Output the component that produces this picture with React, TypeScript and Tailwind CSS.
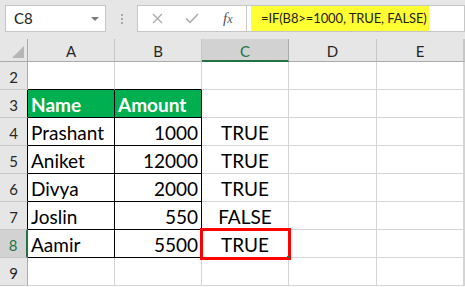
import React from "react";

const font = { fontFamily: "Lato, 'Liberation Sans', sans-serif" };

const COLS = ["A", "B", "C", "D", "E", ""];

const DATA: { row: number; a?: string; b?: string; c?: string }[] = [
  { row: 2 },
  { row: 3, a: "Name", b: "Amount" },
  { row: 4, a: "Prashant", b: "1000", c: "TRUE" },
  { row: 5, a: "Aniket", b: "12000", c: "TRUE" },
  { row: 6, a: "Divya", b: "2000", c: "TRUE" },
  { row: 7, a: "Joslin", b: "550", c: "FALSE" },
  { row: 8, a: "Aamir", b: "5500", c: "TRUE" },
  { row: 9 },
];

function Toolbar() {
  return (
    <div className="h-[39px] bg-[#e6e6e6] flex items-start pt-[5px]">
      <div className="ml-[5px] w-[101px] h-[27px] border border-[#c6c6c6] bg-white flex items-center justify-between pl-[8px] pr-[6px]">
        <span className="text-[15px] text-[#222]">C8</span>
        <svg width="8" height="4" viewBox="0 0 8 4">
          <path d="M0 0 L8 0 L4 4 Z" fill="#7a7a7a" />
        </svg>
      </div>
      <div className="w-[31px] h-[27px] flex flex-col items-center justify-center gap-[2px]">
        <span className="w-[2px] h-[2px] bg-[#a8a8a8]" />
        <span className="w-[2px] h-[2px] bg-[#a8a8a8]" />
        <span className="w-[2px] h-[2px] bg-[#a8a8a8]" />
      </div>
      <div className="w-[110px] h-[27px] border border-[#c6c6c6] bg-white flex items-center pl-[14px]">
        <svg width="11" height="11" viewBox="0 0 11 11">
          <path d="M1 1 L10 10 M10 1 L1 10" stroke="#a9a9a9" strokeWidth="1.3" />
        </svg>
        <svg className="ml-[22px]" width="14" height="11" viewBox="0 0 14 11">
          <path d="M1 5.5 L5 9.5 L13 1" stroke="#a9a9a9" strokeWidth="1.5" fill="none" />
        </svg>
        <span
          className="ml-[24px] italic text-[15px] text-[#555] leading-none"
          style={{ fontFamily: "'Liberation Serif', serif" }}
        >
          f<span className="text-[12px]">x</span>
        </span>
      </div>
      <div className="flex-1 h-[27px] border border-l-0 border-[#c6c6c6] bg-white pl-[4px]">
        <div className="w-[178px] h-[25px] bg-[#ffff33] flex items-center pl-[10px] text-[13px] tracking-[-0.1px] text-[#222] whitespace-nowrap">
          =IF(B8&gt;=1000, TRUE, FALSE)
        </div>
      </div>
    </div>
  );
}

function ColumnHeaders() {
  return (
    <>
      <div className="h-[23px] bg-[#e6e6e6] border-b border-r border-[#ababab] flex items-end justify-end pr-[3px] pb-[3px]">
        <svg width="12" height="12" viewBox="0 0 12 12">
          <path d="M12 0 L12 12 L0 12 Z" fill="#b6b6b6" />
        </svg>
      </div>
      {COLS.map((c) =>
        c === "C" ? (
          <div
            key={c}
            className="h-[23px] bg-[#d2d2d2] border-r border-[#ababab] border-b-2 border-b-[#217346] flex items-end justify-center pb-[1px] leading-none text-[15px] text-[#217346]"
          >
            {c}
          </div>
        ) : (
          <div
            key={c || "f"}
            className="h-[23px] bg-[#e6e6e6] border-r border-b border-[#c6c6c6] border-b-[#ababab] flex items-end justify-center pb-[2px] leading-none text-[15px] text-[#262626]"
          >
            {c}
          </div>
        )
      )}
    </>
  );
}

function RowHeader({ row }: { row: number }) {
  if (row === 8) {
    return (
      <div className="h-[28px] bg-[#d2d2d2] border-b border-[#c6c6c6] border-r-2 border-r-[#217346] flex items-end justify-center pb-[4px] leading-none text-[15px] text-[#217346]">
        {row}
      </div>
    );
  }
  const inTable = row >= 3 && row <= 7;
  return (
    <div
      className={
        inTable
          ? "h-[28px] bg-[#e6e6e6] border-b border-[#c6c6c6] border-r border-r-black flex items-end justify-center pb-[4px] leading-none text-[15px] text-[#262626]"
          : "h-[28px] bg-[#e6e6e6] border-b border-[#c6c6c6] border-r border-r-[#ababab] flex items-end justify-center pb-[4px] leading-none text-[15px] text-[#262626]"
      }
    >
      {row}
    </div>
  );
}

function Row({ row, a, b, c }: { row: number; a?: string; b?: string; c?: string }) {
  const inTable = row >= 3 && row <= 8;
  const isHead = row === 3;
  const tableCell = isHead
    ? "h-[28px] bg-[#00b050] border-r border-b border-black flex items-end pb-[3px] leading-none text-[19px] font-bold text-white"
    : "h-[28px] bg-white border-r border-b border-black flex items-end pb-[3px] leading-none text-[19px] text-black";
  const aboveTable = "h-[28px] bg-white border-r border-[#d4d4d4] border-b border-b-black";
  const plain = "h-[28px] bg-white border-r border-b border-[#d4d4d4]";

  return (
    <>
      <RowHeader row={row} />
      {inTable ? (
        <div className={`${tableCell} pl-[3px]`}>{a}</div>
      ) : (
        <div className={row === 2 ? aboveTable : plain} />
      )}
      {inTable ? (
        <div className={`${tableCell} ${isHead ? "pl-[3px]" : "justify-end pr-[3px]"}`}>{b}</div>
      ) : (
        <div className={row === 2 ? aboveTable : plain} />
      )}
      <div className="relative h-[28px] bg-white border-r border-b border-[#d4d4d4] flex items-end justify-center pb-[3px] leading-none text-[19px] text-black">
        {c}
        {row === 8 && (
          <div className="absolute z-10 -left-[2px] -top-[2px] w-[91px] h-[32px] border-[3px] border-[#ff0000]">
            <div className="absolute right-[-1px] bottom-[-1px] w-[2px] h-[2px] bg-[#217346]" />
          </div>
        )}
      </div>
      <div className={plain} />
      <div className={plain} />
      <div className={plain} />
    </>
  );
}

export default function App() {
  return (
    <div className="w-[465px] h-[287px] overflow-hidden bg-white" style={font}>
      <Toolbar />
      <div className="grid grid-cols-[28px_87px_87px_87px_88px_87px_1fr]">
        <ColumnHeaders />
        {DATA.map((d) => (
          <Row key={d.row} {...d} />
        ))}
      </div>
    </div>
  );
}
